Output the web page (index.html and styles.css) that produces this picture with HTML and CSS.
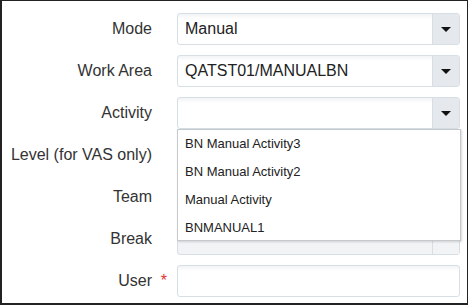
FILE: index.html
```html
<!DOCTYPE html>
<html lang="en">
<head>
    <meta charset="UTF-8">
    <meta name="viewport" content="width=device-width, initial-scale=1.0">
    <title>Assignment</title>
    <link rel="stylesheet" href="styles.css">
</head>
<body>

<div class="frame">
    <form class="form-grid">
        <label class="label">Mode</label>
        <div class="select">
            <span class="value">Manual</span>
            <span class="arrow"></span>
        </div>

        <label class="label">Work Area</label>
        <div class="select">
            <span class="value">QATST01/MANUALBN</span>
            <span class="arrow"></span>
        </div>

        <label class="label">Activity</label>
        <div class="select open">
            <span class="value"></span>
            <span class="arrow"></span>
            <!-- open list of the Activity select -->
            <ul class="dropdown">
                <li>BN Manual Activity3</li>
                <li>BN Manual Activity2</li>
                <li>Manual Activity</li>
                <li>BNMANUAL1</li>
            </ul>
        </div>

        <label class="label">Level (for VAS only)</label>
        <div class="select disabled">
            <span class="value"></span>
            <span class="arrow"></span>
        </div>

        <label class="label">Team</label>
        <div class="select disabled">
            <span class="value"></span>
            <span class="arrow"></span>
        </div>

        <label class="label">Break</label>
        <div class="select disabled">
            <span class="value"></span>
            <span class="arrow"></span>
        </div>

        <label class="label required">User</label>
        <div class="input"></div>
    </form>
</div>

</body>
</html>
```

FILE: styles.css
```css
body {
    margin: 0;
    font-family: "Liberation Sans", Arial, sans-serif;
    color: #333;
    background-color: #fff;
}
.frame {
    width: 465px;
    height: 302px;
    border: 1px solid #222;
    border-left-width: 2px;
    border-bottom-width: 2px;
    box-sizing: content-box;
}
.form-grid {
    display: grid;
    grid-template-columns: 150px 283px;
    grid-auto-rows: 32px;
    column-gap: 25px;
    row-gap: 10px;
    padding-top: 12px;
    margin: 0;
}
.label {
    display: flex;
    align-items: center;
    justify-content: flex-end;
    font-size: 16px;
    color: #333;
    position: relative;
}
.required::after {
    content: "*";
    color: #e0332f;
    position: absolute;
    right: -15px;
    font-size: 16px;
}
.select, .input {
    position: relative;
    display: flex;
    border: 1px solid #d6dfe6;
    border-radius: 3px;
    background: linear-gradient(#f1f3f5, #fff 5px);
    box-sizing: border-box;
}
.value {
    flex: 1;
    display: flex;
    align-items: center;
    padding-left: 7px;
    font-size: 16px;
    color: #222;
}
.arrow {
    width: 26px;
    border-left: 1px solid #d6dfe6;
    background-color: #e5e9ed;
    display: flex;
    align-items: center;
    justify-content: center;
}
.arrow::before {
    content: "";
    border-left: 5px solid transparent;
    border-right: 5px solid transparent;
    border-top: 5px solid #111;
}
.disabled {
    background: #f1f3f5;
}
.disabled .arrow {
    background-color: #f1f3f5;
}
.disabled .arrow::before {
    display: none;
}
.dropdown {
    position: absolute;
    top: 31px;
    left: -1px;
    width: 284px;
    height: 112px;
    margin: 0;
    padding: 0;
    list-style: none;
    background-color: #fff;
    border: 1px solid #c5c9cd;
    box-shadow: 1px 1px 2px rgba(0, 0, 0, 0.15);
    box-sizing: border-box;
    z-index: 2;
}
.dropdown li {
    height: 28px;
    line-height: 28px;
    padding-left: 7px;
    font-size: 13px;
    color: #222;
}
```
